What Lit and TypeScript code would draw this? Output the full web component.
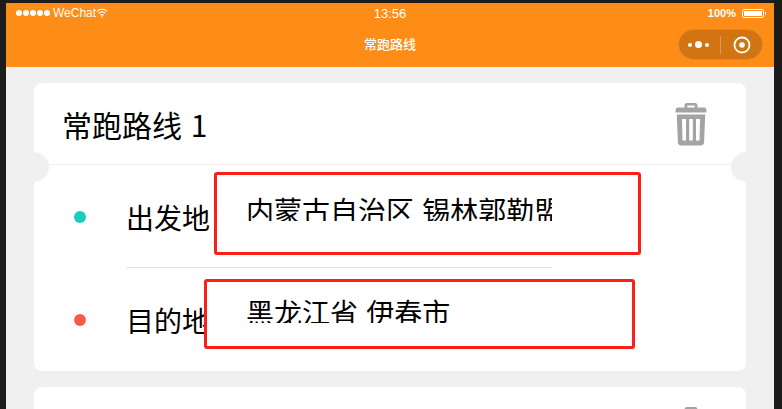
import { LitElement, html, css } from "lit";
import { customElement } from "lit/decorators.js";

const trash = () => html`
  <svg class="trash" viewBox="0 0 32 44" fill="#a3a3a3">
    <path d="M9.500 6V3.500C9.500 2 10.500 1 12 1h8c1.500 0 2.500 1 2.500 2.500V6h-2.800V3.600h-7.400V6z" />
    <path d="M3 5.500h26c1.400 0 2.400 1 2.400 2.400v2.600H.6V7.900c0-1.400 1-2.400 2.400-2.400z" />
    <path fill-rule="evenodd" d="M1.800 12.500h28.400l-1.100 28c-.1 1.700-1.300 2.900-3 2.900H5.900c-1.700 0-2.900-1.200-3-2.900zM7 17l.5 21.500h3.500V17zm7.200 0v21.500h3.600V17zm6.800 0v21.500h3.500L25 17z" />
  </svg>
`;

@customElement("app-root")
export class AppRoot extends LitElement {
  static styles = css`
    :host {
      display: block;
      position: relative;
      width: 782px;
      height: 409px;
      overflow: hidden;
      background: #1c1c1c;
      font-family: "Liberation Sans", "Noto Sans CJK SC", sans-serif;
    }
    .phone {
      margin: 3px 0 0 6px;
      width: 768px;
      height: 406px;
      background: #f0f0f0;
      overflow: hidden;
    }
    .top {
      height: 64px;
      background: #fd8d17;
      color: #fff;
      position: relative;
    }
    .status {
      height: 20px;
      padding: 0 10px;
      display: grid;
      grid-template-columns: 1fr auto 1fr;
      align-items: center;
      font-size: 12px;
    }
    .status-left {
      display: flex;
      align-items: center;
      gap: 3px;
    }
    .signal {
      display: flex;
      gap: 1px;
    }
    .signal i {
      width: 6px;
      height: 6px;
      border-radius: 50%;
      background: #fff;
    }
    .status-left svg {
      margin-left: -3px;
      width: 12px;
      height: 10px;
    }
    .clock {
      font-size: 13px;
    }
    .status-right {
      display: flex;
      justify-content: flex-end;
      align-items: center;
      gap: 6px;
      font-size: 11px;
      font-weight: 700;
    }
    .battery {
      width: 22px;
      height: 9px;
      box-sizing: border-box;
      border: 1px solid #fff;
      border-radius: 2px;
      padding: 1px;
      position: relative;
    }
    .battery::before {
      content: "";
      display: block;
      height: 100%;
      background: #fff;
    }
    .battery::after {
      content: "";
      position: absolute;
      right: -3px;
      top: 2px;
      width: 1px;
      height: 3px;
      background: #fff;
    }
    .title {
      text-align: center;
      font-size: 13px;
      font-weight: 500;
      line-height: 42px;
      font-family: "Noto Sans CJK SC", sans-serif;
    }
    .capsule {
      position: absolute;
      left: 672px;
      top: 26px;
      width: 85px;
      height: 31px;
      box-sizing: border-box;
      border-radius: 16px;
      background: #d37413;
      border: 1px solid #dc8a36;
      display: flex;
      align-items: center;
    }
    .more {
      width: 41px;
      box-sizing: border-box;
      padding-right: 3px;
      display: flex;
      justify-content: center;
      align-items: center;
      gap: 3px;
    }
    .more i {
      width: 4px;
      height: 4px;
      border-radius: 50%;
      background: #fff;
    }
    .more i:nth-child(2) {
      width: 7px;
      height: 7px;
    }
    .sep {
      width: 1px;
      height: 18px;
      background: #dc9a55;
    }
    .target {
      flex: 1;
      display: flex;
      justify-content: center;
    }
    .target svg {
      width: 18px;
      height: 18px;
    }
    .list {
      padding: 16px 28px;
      display: flex;
      flex-direction: column;
      gap: 16px;
    }
    .card {
      position: relative;
      background: #fff;
      border-radius: 8px;
      height: 288px;
      flex: none;
      overflow: hidden;
    }
    .card-head {
      height: 82px;
      box-sizing: border-box;
      padding: 0 39px 0 28px;
      display: flex;
      justify-content: space-between;
      align-items: center;
      border-bottom: 1px solid #f0f0f0;
      font-size: 30px;
      word-spacing: 2px;
      color: #000;
      font-family: "Noto Sans CJK SC", sans-serif;
    }
    .trash {
      width: 32px;
      height: 44px;
    }
    .notch {
      position: absolute;
      top: 69px;
      width: 30px;
      height: 30px;
      border-radius: 50%;
      background: #f0f0f0;
    }
    .notch.l {
      left: -15px;
    }
    .notch.r {
      right: -15px;
    }
    .row {
      height: 103px;
      box-sizing: border-box;
      padding: 1px 0 0 40px;
      display: flex;
      align-items: center;
      gap: 40px;
      font-size: 28px;
      color: #000;
      font-family: "Noto Sans CJK SC", sans-serif;
    }
    .row.first {
      height: 102px;
      padding-top: 2px;
    }
    .rule {
      margin-left: 92px;
      width: 426px;
      height: 1px;
      background: #e3e3e3;
    }
    .dot {
      width: 12px;
      height: 12px;
      border-radius: 50%;
    }
    .mask {
      position: absolute;
      box-sizing: border-box;
      border: 3px solid #fb1f17;
      border-radius: 3px;
      background: #fff;
    }
    .mask.a {
      left: 214px;
      top: 172px;
      width: 427px;
      height: 83px;
    }
    .mask.b {
      left: 204px;
      top: 279px;
      width: 431px;
      height: 70px;
    }
    .value {
      position: absolute;
      font-size: 28px;
      line-height: 30px;
      word-spacing: 2px;
      overflow: hidden;
      white-space: nowrap;
      color: #000;
      font-family: "Noto Sans CJK SC", sans-serif;
    }
    .mask.a .value {
      left: 29px;
      top: 20px;
      width: 306px;
      height: 26px;
    }
    .mask.b .value {
      left: 39px;
      top: 17px;
      width: 306px;
      height: 24px;
      line-height: 27px;
    }
  `;

  render() {
    return html`
      <div class="phone">
        <div class="top">
          <div class="status">
            <div class="status-left">
              <span class="signal"><i></i><i></i><i></i><i></i><i></i></span>
              <span>WeChat</span>
              <svg viewBox="0 0 12 10" fill="none" stroke="#fff" stroke-width="1.200">
                <path d="M.7 3.400a7.600 7.600 0 0 1 10.600 0M2.500 5.400a5 5 0 0 1 7 0M4.300 7.300a2.500 2.500 0 0 1 3.400 0" />
                <circle cx="6" cy="9" r=".8" fill="#fff" stroke="none" />
              </svg>
            </div>
            <div class="clock">13:56</div>
            <div class="status-right"><span>100%</span><span class="battery"></span></div>
          </div>
          <div class="title">常跑路线</div>
          <div class="capsule">
            <div class="more"><i></i><i></i><i></i></div>
            <div class="sep"></div>
            <div class="target">
              <svg viewBox="0 0 18 18">
                <circle cx="9" cy="9" r="7.500" fill="none" stroke="#fff" stroke-width="1.800" />
                <circle cx="9" cy="9" r="2.800" fill="#fff" />
              </svg>
            </div>
          </div>
        </div>
        <div class="list">
          <div class="card">
            <div class="card-head"><span>常跑路线 1</span>${trash()}</div>
            <div class="notch l"></div>
            <div class="notch r"></div>
            <div class="row first"><span class="dot" style="background:#19cbbd"></span><span>出发地</span></div>
            <div class="rule"></div>
            <div class="row"><span class="dot" style="background:#fb5a4a"></span><span>目的地</span></div>
          </div>
          <div class="card">
            <div class="card-head"><span>常跑路线 2</span>${trash()}</div>
            <div class="notch l"></div>
            <div class="notch r"></div>
          </div>
        </div>
      </div>
      <div class="mask a"><div class="value">内蒙古自治区 锡林郭勒盟</div></div>
      <div class="mask b"><div class="value">黑龙江省 伊春市</div></div>
    `;
  }
}
